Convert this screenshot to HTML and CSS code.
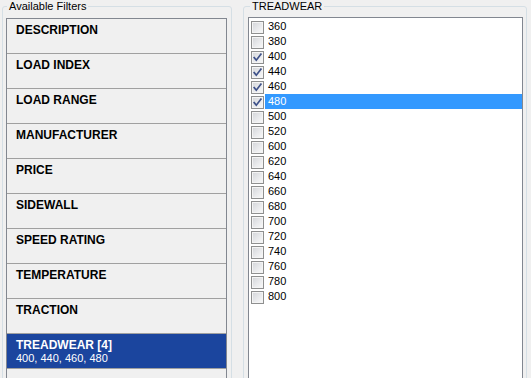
FILE: index.html
```html
<!DOCTYPE html>
<html>
<head>
<meta charset="utf-8">
<link rel="stylesheet" href="styles.css">
</head>
<body>
<div class="wrap">
  <fieldset class="group group-left">
    <legend class="legend legend-left">Available Filters</legend>
    <div class="filters">
      <div class="filter">DESCRIPTION</div>
      <div class="filter">LOAD INDEX</div>
      <div class="filter">LOAD RANGE</div>
      <div class="filter">MANUFACTURER</div>
      <div class="filter">PRICE</div>
      <div class="filter">SIDEWALL</div>
      <div class="filter">SPEED RATING</div>
      <div class="filter">TEMPERATURE</div>
      <div class="filter">TRACTION</div>
      <div class="filter selected">TREADWEAR [4]<div class="sub">400, 440, 460, 480</div></div>
      <div class="filter"></div>
    </div>
  </fieldset>
  <fieldset class="group group-right">
    <legend class="legend legend-right">TREADWEAR</legend>
    <div class="checklist">
      <div class="row"><span class="cb"></span><span class="lbl">360</span></div>
      <div class="row"><span class="cb"></span><span class="lbl">380</span></div>
      <div class="row"><span class="cb"><svg viewBox="0 0 11 11" width="11" height="11"><path d="M2.2 5.6 L4.3 8.2 L8.9 2.2" fill="none" stroke="#3e5189" stroke-width="1.7" stroke-linecap="square"/></svg></span><span class="lbl">400</span></div>
      <div class="row"><span class="cb"><svg viewBox="0 0 11 11" width="11" height="11"><path d="M2.2 5.6 L4.3 8.2 L8.9 2.2" fill="none" stroke="#3e5189" stroke-width="1.7" stroke-linecap="square"/></svg></span><span class="lbl">440</span></div>
      <div class="row"><span class="cb"><svg viewBox="0 0 11 11" width="11" height="11"><path d="M2.2 5.6 L4.3 8.2 L8.9 2.2" fill="none" stroke="#3e5189" stroke-width="1.7" stroke-linecap="square"/></svg></span><span class="lbl">460</span></div>
      <div class="row"><span class="cb"><svg viewBox="0 0 11 11" width="11" height="11"><path d="M2.2 5.6 L4.3 8.2 L8.9 2.2" fill="none" stroke="#3e5189" stroke-width="1.7" stroke-linecap="square"/></svg></span><span class="lbl hl">480</span></div>
      <div class="row"><span class="cb"></span><span class="lbl">500</span></div>
      <div class="row"><span class="cb"></span><span class="lbl">520</span></div>
      <div class="row"><span class="cb"></span><span class="lbl">600</span></div>
      <div class="row"><span class="cb"></span><span class="lbl">620</span></div>
      <div class="row"><span class="cb"></span><span class="lbl">640</span></div>
      <div class="row"><span class="cb"></span><span class="lbl">660</span></div>
      <div class="row"><span class="cb"></span><span class="lbl">680</span></div>
      <div class="row"><span class="cb"></span><span class="lbl">700</span></div>
      <div class="row"><span class="cb"></span><span class="lbl">720</span></div>
      <div class="row"><span class="cb"></span><span class="lbl">740</span></div>
      <div class="row"><span class="cb"></span><span class="lbl">760</span></div>
      <div class="row"><span class="cb"></span><span class="lbl">780</span></div>
      <div class="row"><span class="cb"></span><span class="lbl">800</span></div>
    </div>
  </fieldset>
</div>
</body>
</html>
```

FILE: styles.css
```css
html, body {
  margin: 0;
  padding: 0;
  background: #f0f0f0;
  overflow: hidden;
  height: 378px;
  font-family: "Liberation Sans", Arial, sans-serif;
  color: #000;
}
.wrap {
  display: flex;
  align-items: flex-start;
  padding-left: 2px;
  gap: 11px;
}
.group {
  margin: 0;
  border: 1px solid #d5dfe5;
  border-radius: 3px;
  min-width: 0;
  box-sizing: border-box;
  height: 420px;
}
.group-left {
  width: 230px;
  padding: 5px 4px 0 3px;
}
.group-right {
  width: 284px;
  padding: 4px 3px 0 4px;
}
.legend {
  font-size: 11px;
  line-height: 13px;
  padding: 0 2px;
  color: #000;
}
.legend-left { margin-left: 1px; }
.legend-right { margin-left: 2px; }

.filters {
  border: 1px solid #828790;
  background: #f0f0f0;
  height: 400px;
}
.filter {
  height: 35px;
  box-sizing: border-box;
  padding: 4px 0 0 9px;
  border-bottom: 1px solid #a0a0a0;
  font-size: 12px;
  line-height: 14px;
  font-weight: bold;
  color: #000;
}
.filter.selected {
  background: #1b459e;
  color: #fff;
}
.sub {
  font-weight: normal;
  font-size: 11px;
  line-height: 13px;
}

.checklist {
  border: 1px solid #828790;
  background: #fff;
  height: 400px;
  padding-top: 1px;
  box-sizing: border-box;
}
.row {
  display: flex;
  align-items: flex-start;
  height: 15px;
  padding-left: 2px;
}
.cb {
  width: 13px;
  height: 13px;
  box-sizing: border-box;
  margin-top: 2px;
  border: 1px solid #8e8f8f;
  background: linear-gradient(135deg, #d2d4d8 0%, #e9eaec 55%, #fafafa 100%);
  box-shadow: inset 0 0 0 1px #f4f4f4;
  display: flex;
  align-items: center;
  justify-content: center;
  flex: none;
}
.cb svg { display: block; }
.lbl {
  margin-left: 1px;
  padding-left: 3px;
  font-size: 11px;
  line-height: 15px;
  height: 15px;
  flex: 1;
}
.lbl.hl {
  background: #3399ff;
  color: #fff;
}
```
